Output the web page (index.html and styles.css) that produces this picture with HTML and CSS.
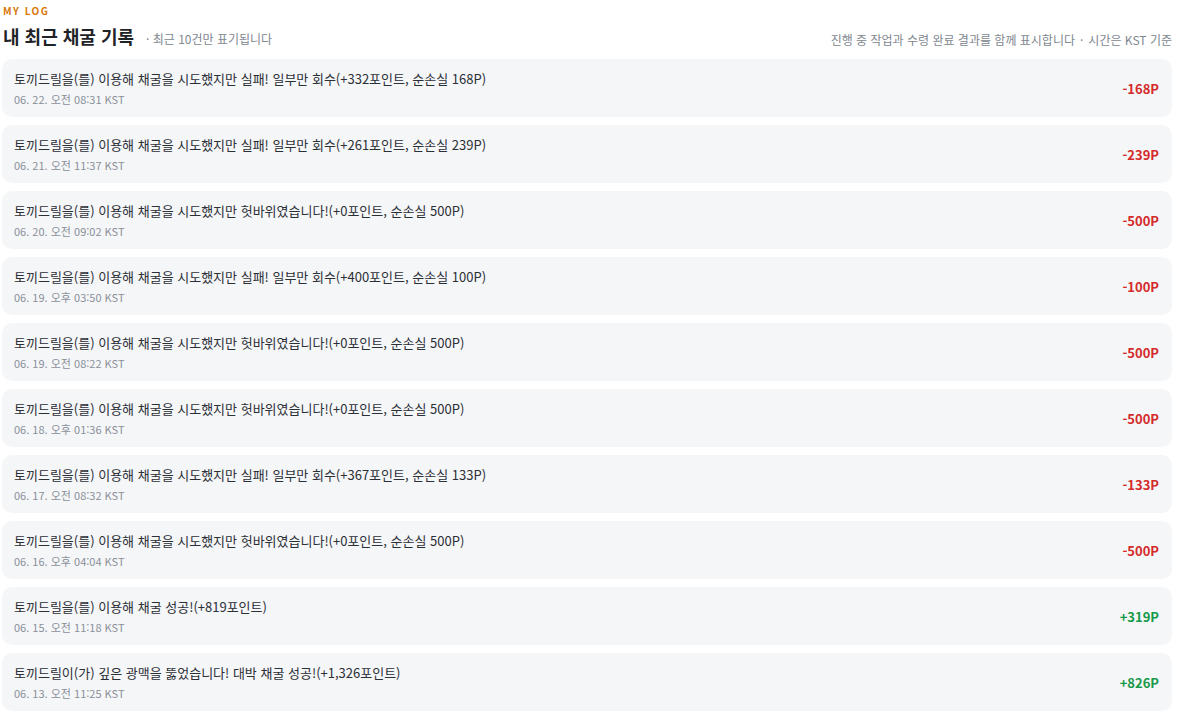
FILE: index.html
```html
<!DOCTYPE html>
<html lang="ko">
<head>
<meta charset="utf-8">
<link rel="stylesheet" href="styles.css">
</head>
<body>
<div class="log">
  <div class="eyebrow">MY LOG</div>
  <div class="head">
    <div class="head-left">
      <h2 class="title">내 최근 채굴 기록</h2>
      <span class="sub">· 최근 10건만 표기됩니다</span>
    </div>
    <div class="head-right"><span>진행 중 작업과 수령 완료 결과를 함께 표시합니다</span><span class="dot">·</span><span>시간은 KST 기준</span></div>
  </div>
  <ul class="list">
    <li class="item"><div class="info"><div class="msg">토끼드릴을(를) 이용해 채굴을 시도했지만 실패! 일부만 회수(+332포인트, 순손실 168P)</div><div class="date">06. 22. 오전 08:31 KST</div></div><div class="amt neg">-168P</div></li>
    <li class="item"><div class="info"><div class="msg">토끼드릴을(를) 이용해 채굴을 시도했지만 실패! 일부만 회수(+261포인트, 순손실 239P)</div><div class="date">06. 21. 오전 11:37 KST</div></div><div class="amt neg">-239P</div></li>
    <li class="item"><div class="info"><div class="msg">토끼드릴을(를) 이용해 채굴을 시도했지만 헛바위였습니다!(+0포인트, 순손실 500P)</div><div class="date">06. 20. 오전 09:02 KST</div></div><div class="amt neg">-500P</div></li>
    <li class="item"><div class="info"><div class="msg">토끼드릴을(를) 이용해 채굴을 시도했지만 실패! 일부만 회수(+400포인트, 순손실 100P)</div><div class="date">06. 19. 오후 03:50 KST</div></div><div class="amt neg">-100P</div></li>
    <li class="item"><div class="info"><div class="msg">토끼드릴을(를) 이용해 채굴을 시도했지만 헛바위였습니다!(+0포인트, 순손실 500P)</div><div class="date">06. 19. 오전 08:22 KST</div></div><div class="amt neg">-500P</div></li>
    <li class="item"><div class="info"><div class="msg">토끼드릴을(를) 이용해 채굴을 시도했지만 헛바위였습니다!(+0포인트, 순손실 500P)</div><div class="date">06. 18. 오후 01:36 KST</div></div><div class="amt neg">-500P</div></li>
    <li class="item"><div class="info"><div class="msg">토끼드릴을(를) 이용해 채굴을 시도했지만 실패! 일부만 회수(+367포인트, 순손실 133P)</div><div class="date">06. 17. 오전 08:32 KST</div></div><div class="amt neg">-133P</div></li>
    <li class="item"><div class="info"><div class="msg">토끼드릴을(를) 이용해 채굴을 시도했지만 헛바위였습니다!(+0포인트, 순손실 500P)</div><div class="date">06. 16. 오후 04:04 KST</div></div><div class="amt neg">-500P</div></li>
    <li class="item"><div class="info"><div class="msg">토끼드릴을(를) 이용해 채굴 성공!(+819포인트)</div><div class="date">06. 15. 오전 11:18 KST</div></div><div class="amt pos">+319P</div></li>
    <li class="item"><div class="info"><div class="msg">토끼드릴이(가) 깊은 광맥을 뚫었습니다! 대박 채굴 성공!(+1,326포인트)</div><div class="date">06. 13. 오전 11:25 KST</div></div><div class="amt pos">+826P</div></li>
  </ul>
</div>
</body>
</html>
```

FILE: styles.css
```css
* { box-sizing: border-box; }
html, body { margin: 0; padding: 0; background: #ffffff; }
body {
  font-family: "Noto Sans CJK KR", "Noto Sans", sans-serif;
  color: #222;
}
.log {
  width: 1170px;
  margin-left: 2px;
  padding-top: 4px;
}
.eyebrow {
  font-size: 10px;
  font-weight: 700;
  letter-spacing: 1.5px;
  color: #d97706;
  line-height: 14px;
  padding-left: 1px;
}
.head {
  display: flex;
  justify-content: space-between;
  align-items: flex-end;
  margin-top: 5px;
  margin-bottom: 10px;
}
.head-left {
  display: flex;
  align-items: baseline;
  gap: 12px;
}
.title {
  margin: 0;
  font-size: 18px;
  font-weight: 700;
  line-height: 26px;
  color: #1f2328;
  padding-left: 1px;
}
.sub {
  font-size: 12px;
  color: #808790;
}
.head-right {
  font-size: 12px;
  color: #808790;
  line-height: 18px;
}
.dot {
  margin: 0 5px;
}
.list {
  list-style: none;
  margin: 0;
  padding: 0;
  display: flex;
  flex-direction: column;
  gap: 8px;
}
.item {
  display: flex;
  align-items: center;
  justify-content: space-between;
  background: #f5f6f8;
  border-radius: 10px;
  height: 58px;
  padding: 0 13px 0 12px;
}
.info {
  display: flex;
  flex-direction: column;
  gap: 4px;
}
.msg {
  font-size: 13px;
  line-height: 19px;
  color: #2b2f36;
}
.date {
  font-size: 11px;
  line-height: 15px;
  color: #8a9099;
}
.amt {
  font-size: 13px;
  font-weight: 700;
  padding-top: 1px;
}
.neg { color: #d42a2a; }
.pos { color: #17994a; }
```
